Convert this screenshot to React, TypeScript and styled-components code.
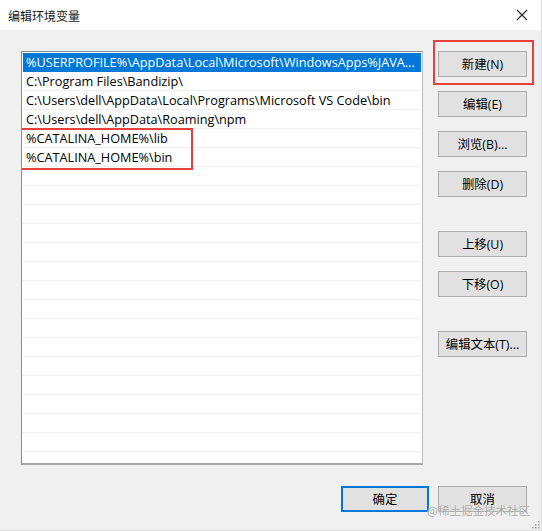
import React from "react";
import styled, { createGlobalStyle } from "styled-components";

const Global = createGlobalStyle`
  html, body { margin: 0; padding: 0; background: #f0f0f0; }
  body { width: 542px; height: 531px; overflow: hidden; }
`;

const FONT = `"Open Sans", "Noto Sans CJK SC", sans-serif`;

const Window = styled.div`
  position: relative;
  width: 542px;
  height: 531px;
  box-sizing: border-box;
  display: flex;
  flex-direction: column;
  background: #f0f0f0;
  font-family: ${FONT};
  color: #000;
  border-right: 1px solid #dadada;
  border-bottom: 1px solid #dadada;
`;

const TitleBar = styled.div`
  height: 30px;
  flex: none;
  background: #fff;
  display: flex;
  align-items: center;
  justify-content: space-between;
  padding: 0 13px 0 8px;
`;

const Title = styled.span`
  font-size: 12px;
  font-family: "Noto Sans CJK SC", sans-serif;
  color: #1a1a1a;
`;

const Body = styled.div`
  flex: 1;
  display: flex;
  flex-direction: column;
  padding: 21px 14px 0 21px;
`;

const Main = styled.div`
  display: flex;
  gap: 15px;
`;

const ListBox = styled.div`
  position: relative;
  width: 402px;
  height: 414px;
  box-sizing: border-box;
  background: #fff;
  border: 1px solid #8c8c8c;
  border-right-color: #bdbdbd;
  border-bottom: 2px solid #a8a8a8;
  padding: 1px;
  overflow: hidden;
`;

const Row = styled.div<{ $selected?: boolean }>`
  height: 19px;
  box-sizing: border-box;
  border-bottom: 1px solid #efefef;
  padding-left: 3px;
  font-size: 12.7px;
  line-height: 18px;
  white-space: nowrap;
  overflow: hidden;
  background: ${(p) => (p.$selected ? "#0078d7" : "#fff")};
  color: ${(p) => (p.$selected ? "#fff" : "#000")};
  border-bottom-color: ${(p) => (p.$selected ? "#0078d7" : "#efefef")};
`;

const Highlight = styled.div`
  position: absolute;
  box-sizing: border-box;
  border: 2px solid #e8403a;
  pointer-events: none;
`;

const ButtonColumn = styled.div`
  display: flex;
  flex-direction: column;
  width: 89px;
`;

const Btn = styled.button<{ $gapTop?: number; $primary?: boolean; $width?: number }>`
  position: relative;
  width: ${(p) => p.$width ?? 89}px;
  height: 26px;
  margin-top: ${(p) => p.$gapTop ?? 0}px;
  box-sizing: border-box;
  background: #e1e1e1;
  border: ${(p) => (p.$primary ? "2px solid #0078d7" : "1px solid #adadad")};
  border-radius: 0;
  font-family: ${FONT};
  font-size: 12.4px;
  color: #000;
  padding: 0;
  display: flex;
  align-items: center;
  justify-content: center;
`;

const Footer = styled.div`
  display: flex;
  justify-content: flex-end;
  gap: 9px;
  margin-top: 21px;
`;

const Watermark = styled.div`
  position: absolute;
  left: 427px;
  top: 502px;
  font-family: "Noto Sans CJK SC", sans-serif;
  font-size: 11.5px;
  color: rgba(140, 140, 140, 0.75);
  text-shadow: 0 0 1px #fff;
  white-space: nowrap;
  pointer-events: none;
`;

const Grip = styled.svg`
  position: absolute;
  right: 1px;
  bottom: 1px;
`;

const CloseIcon = () => (
  <svg width="12" height="12" viewBox="0 0 12 12">
    <path d="M1 1 L11 11 M11 1 L1 11" stroke="#222" strokeWidth="1.1" />
  </svg>
);

const entries = [
  "%USERPROFILE%\\AppData\\Local\\Microsoft\\WindowsApps%JAVA...",
  "C:\\Program Files\\Bandizip\\",
  "C:\\Users\\dell\\AppData\\Local\\Programs\\Microsoft VS Code\\bin",
  "C:\\Users\\dell\\AppData\\Roaming\\npm",
  "%CATALINA_HOME%\\lib",
  "%CATALINA_HOME%\\bin",
];

const TOTAL_ROWS = 22;

export default function App() {
  const rows = Array.from({ length: TOTAL_ROWS }, (_, i) => entries[i] ?? "");
  return (
    <>
      <Global />
      <Window>
        <TitleBar>
          <Title>编辑环境变量</Title>
          <CloseIcon />
        </TitleBar>
        <Body>
          <Main>
            <ListBox>
              {rows.map((t, i) => (
                <Row key={i} $selected={i === 0}>
                  {t}
                </Row>
              ))}
              <Highlight style={{ left: -6, top: 76, width: 177, height: 42 }} />
            </ListBox>
            <ButtonColumn>
              <Btn>
                新建(N)
                <Highlight style={{ left: -6, top: -12, right: -8, bottom: -9 }} />
              </Btn>
              <Btn $gapTop={14}>编辑(E)</Btn>
              <Btn $gapTop={14}>浏览(B)...</Btn>
              <Btn $gapTop={14}>删除(D)</Btn>
              <Btn $gapTop={34}>上移(U)</Btn>
              <Btn $gapTop={14}>下移(O)</Btn>
              <Btn $gapTop={34}>编辑文本(T)...</Btn>
            </ButtonColumn>
          </Main>
          <Footer>
            <Btn $primary $width={88}>确定</Btn>
            <Btn>取消</Btn>
          </Footer>
        </Body>
        <Watermark>@稀土掘金技术社区</Watermark>
        <Grip width="10" height="10" viewBox="0 0 10 10">
          {[
            [8, 2],
            [5, 5],
            [8, 5],
            [2, 8],
            [5, 8],
            [8, 8],
          ].map(([x, y], i) => (
            <rect key={i} x={x} y={y} width="1.5" height="1.5" fill="#a0a0a0" />
          ))}
        </Grip>
      </Window>
    </>
  );
}
